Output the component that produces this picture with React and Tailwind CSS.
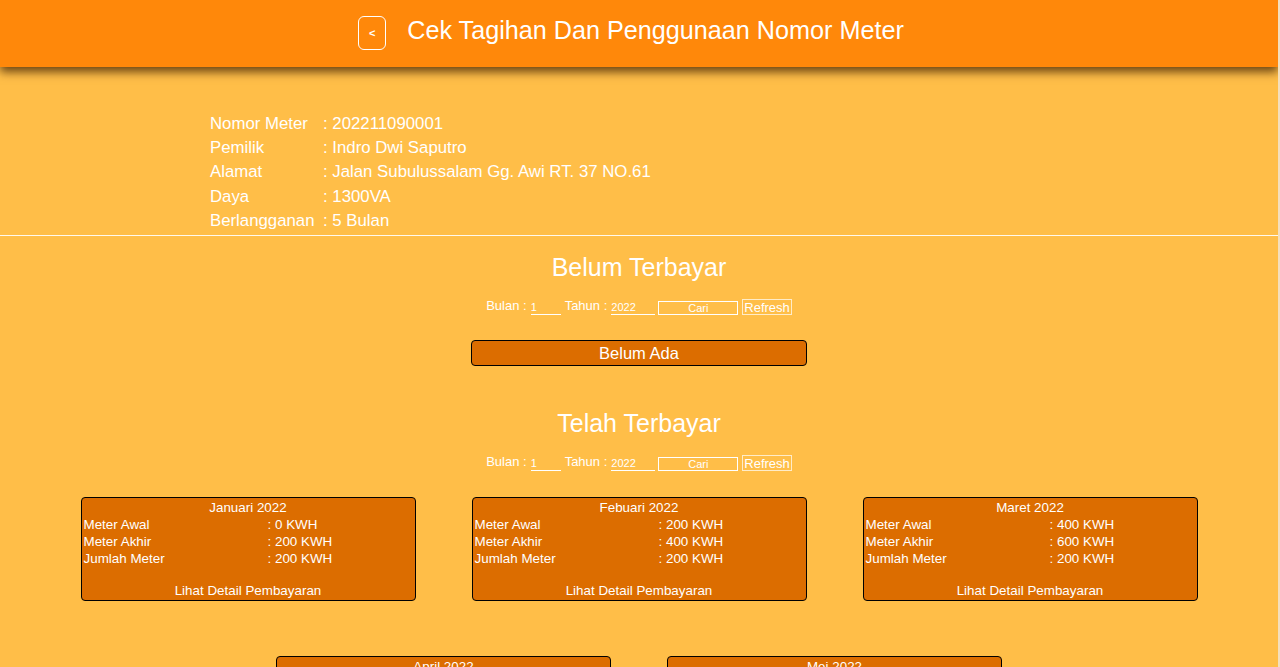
const info = [
  ['Nomor Meter', '202211090001'],
  ['Pemilik', 'Indro Dwi Saputro'],
  ['Alamat', 'Jalan Subulussalam Gg. Awi RT. 37 NO.61'],
  ['Daya', '1300VA'],
  ['Berlangganan', '5 Bulan'],
];

const paid = [
  { bulan: 'Januari 2022', awal: '0', akhir: '200', jumlah: '200' },
  { bulan: 'Febuari 2022', awal: '200', akhir: '400', jumlah: '200' },
  { bulan: 'Maret 2022', awal: '400', akhir: '600', jumlah: '200' },
  { bulan: 'April 2022', awal: '600', akhir: '800', jumlah: '200' },
  { bulan: 'Mei 2022', awal: '800', akhir: '1000', jumlah: '200' },
];

const Filter = () => (
  <div className="flex items-end justify-center text-[13px] text-white h-[16px]">
    <span>Bulan :</span>
    <input
      defaultValue="1"
      className="ml-1 w-[30px] h-[15px] bg-transparent border-b border-white text-[11px] leading-none px-0 outline-none"
    />
    <span className="ml-[4px]">Tahun :</span>
    <input
      defaultValue="2022"
      className="ml-1 w-[44px] h-[15px] bg-transparent border-b border-white text-[11px] leading-none px-0 outline-none"
    />
    <button className="ml-[3px] w-[80px] h-[14px] border border-white text-[11px] leading-none text-white">
      Cari
    </button>
    <button className="ml-[4px] h-[16px] px-[1px] border border-white/70 text-[13px] leading-none text-white">
      Refresh
    </button>
  </div>
);

const Card = ({ item }) => (
  <div className="w-[335px] h-[104px] bg-[#dc6d00] border border-black rounded-[4px] text-white text-[13.4px] leading-[17px] px-[2px] pt-[1px]">
    <div className="text-center">{item.bulan}</div>
    <div className="grid grid-cols-[184px_1fr]">
      <span>Meter Awal</span>
      <span>: {item.awal} KWH</span>
      <span>Meter Akhir</span>
      <span>: {item.akhir} KWH</span>
      <span>Jumlah Meter</span>
      <span>: {item.jumlah} KWH</span>
    </div>
    <div className="text-center mt-[15px]">Lihat Detail Pembayaran</div>
  </div>
);

export default function App() {
  return (
    <div className="min-h-[667px] bg-[#ffbe48] border-r-2 border-[#f4dfbd] font-['Liberation_Sans',Arial,sans-serif] overflow-hidden">
      <header className="relative z-10 h-[67px] bg-[#ff880a] shadow-[0_5px_9px_rgba(60,30,0,0.75)] flex items-center justify-center pr-[16px]">
        <button className="w-[28px] h-[34px] border border-white rounded-[6px] text-white text-[11px] font-bold flex items-center justify-center -mt-[1px]">
          &lt;
        </button>
        <h1 className="ml-[21px] text-white text-[25.2px] -mt-[5px]">
          Cek Tagihan Dan Penggunaan Nomor Meter
        </h1>
      </header>

      <div className="pt-[45px] pl-[210px] pb-[2px] text-white text-[16.8px] leading-[24.2px]">
        {info.map(([k, v]) => (
          <div key={k} className="flex">
            <span className="w-[113px]">{k}</span>
            <span>: {v}</span>
          </div>
        ))}
      </div>
      <hr className="border-0 border-t border-white/90" />

      <h2 className="mt-[16px] text-center text-white text-[25px] leading-[30px]">Belum Terbayar</h2>
      <div className="mt-[17px]">
        <Filter />
      </div>
      <div className="mt-[25px] mx-auto w-[336px] h-[26px] bg-[#dc6d00] border border-black rounded-[4px] text-white text-[16.5px] flex items-center justify-center">
        Belum Ada
      </div>

      <h2 className="mt-[42px] text-center text-white text-[25px] leading-[30px]">Telah Terbayar</h2>
      <div className="mt-[17px]">
        <Filter />
      </div>

      <div className="mt-[26px] flex flex-wrap justify-center gap-x-[56px] gap-y-[55px] pb-10">
        {paid.map((p) => (
          <Card key={p.bulan} item={p} />
        ))}
      </div>
    </div>
  );
}
